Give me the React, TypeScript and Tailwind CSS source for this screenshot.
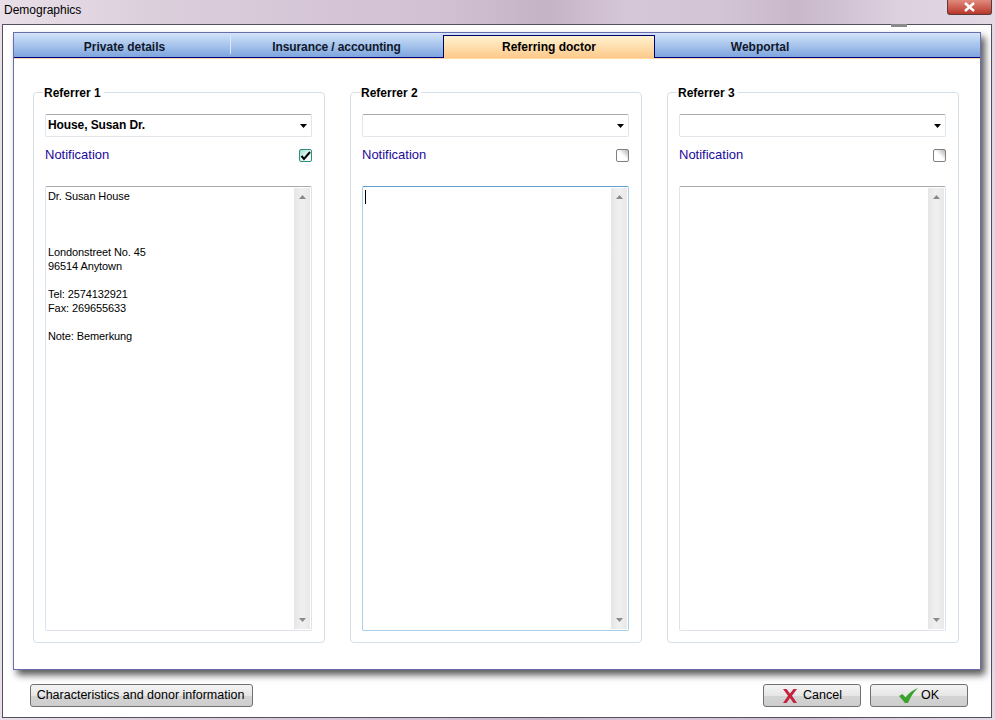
const tabs = ['Private details', 'Insurance / accounting', 'Referring doctor', 'Webportal'];

const addressLines = [
  'Dr. Susan House',
  '',
  '',
  '',
  'Londonstreet No. 45',
  '96514 Anytown',
  '',
  'Tel: 2574132921',
  'Fax: 269655633',
  '',
  'Note: Bemerkung',
];

function Arrow({ up }: { up?: boolean }) {
  return (
    <svg width="7" height="4" viewBox="0 0 7 4" className={up ? 'rotate-180' : ''}>
      <path d="M0 0h7L3.500 4z" fill="#8a8a8a" />
    </svg>
  );
}

function Referrer({
  title,
  doctor,
  checked,
  focused,
  lines,
}: {
  title: string;
  doctor?: string;
  checked?: boolean;
  focused?: boolean;
  lines?: string[];
}) {
  return (
    <fieldset className="w-[292px] h-[559px] border border-[#d5dfe8] rounded-[4px] pl-[11px] pr-[12px] pt-[14px] pb-[11px] flex flex-col min-w-0">
      <legend className="ml-[-2px] pr-[3px] pl-[1px] pt-[2px] text-[12px] font-bold leading-[14px] text-black">{title}</legend>
      <div className="h-[23px] shrink-0 border border-[#e2e5ea] border-t-[#a9a9b0] rounded-[2px] flex items-center justify-between pl-[2px] pr-[4px]">
        <span className="pb-[2px] text-[12px] font-bold tracking-[-0.1px] text-black">{doctor}</span>
        <svg width="7" height="4" viewBox="0 0 7 4" className="mt-[1px]">
          <path d="M0 0h7L3.500 4z" fill="#000" />
        </svg>
      </div>
      <div className="h-[49px] shrink-0 flex justify-between items-start pt-[10px]">
        <span className="text-[13px] leading-[15px] text-[#1a0a9c]">Notification</span>
        {checked ? (
          <span className="mt-[2px] w-[13px] h-[13px] border border-[#2f8f7f] rounded-[2px] bg-gradient-to-br from-[#9fdccb] via-[#e0f5ef] to-white flex items-center justify-center">
            <svg width="11" height="10" viewBox="0 0 11 10">
              <path d="M1.500 5 4 8l6-7" fill="none" stroke="#000" strokeWidth="2" />
            </svg>
          </span>
        ) : (
          <span className="mt-[2px] w-[13px] h-[13px] border border-[#808080] rounded-[2px] bg-gradient-to-bl from-[#b4b4b4] via-white to-white" />
        )}
      </div>
      <div
        className={`flex-1 min-h-0 border rounded-[2px] flex justify-between pl-[2px] pr-[1px] py-[1px] ${
          focused ? 'border-[#a9cfe6] border-t-[#5f9fc9]' : 'border-[#e0e4ea] border-t-[#a9a9a9]'
        }`}
      >
        <div className="pt-[1px] text-[11px] tracking-[-0.1px] leading-[14px] text-black">
          {focused && <div className="w-[1px] h-[14px] bg-black mt-[1px]" />}
          {lines?.map((line, i) => (
            <div key={i} className="h-[14px]">
              {line}
            </div>
          ))}
        </div>
        <div className="w-[16px] bg-gradient-to-r from-[#e6e6e6] via-[#f0f0f0] to-[#e8e8e8] flex flex-col justify-between items-center py-[7px]">
          <Arrow up />
          <Arrow />
        </div>
      </div>
    </fieldset>
  );
}

function ToolButton({ className, children }: { className: string; children: React.ReactNode }) {
  return (
    <button
      className={`h-[23px] border border-[#707070] rounded-[3px] bg-[linear-gradient(#f4f4f4,#e6e6e6_50%,#d4d4d4_52%,#cdcdcd)] text-[12.500px] text-black flex items-center justify-center ${className}`}
    >
      {children}
    </button>
  );
}

export default function App() {
  return (
    <div
      className="w-[995px] h-[720px] overflow-hidden flex flex-col bg-[linear-gradient(90deg,#e8dfe8,#dccfdc_15%,#d4c4d6_35%,#d0c0d2_45%,#c4b3c4_55%,#d6c7d8_63%,#d4c5d6_72%,#c8b8ca_80%,#dccfde_90%,#e3d9e5)]"
      style={{ fontFamily: '"Liberation Sans", Arial, sans-serif' }}
    >
      {/* Titelleiste */}
      <div className="h-[24px] shrink-0 flex justify-between pl-[4px] pr-[3px]">
        <span className="text-[12px] leading-[20px] text-black">Demographics</span>
        <div className="w-[45px] h-[15px] rounded-b-[3px] border border-t-0 border-[#5c3a3a] bg-gradient-to-b from-[#e08a7c] to-[#b8342a] flex items-center justify-center">
          <svg width="13" height="10" viewBox="0 0 13 10">
            <path d="M2 1l9 8M11 1l-9 8" stroke="#fff" strokeWidth="2.400" />
          </svg>
        </div>
      </div>

      {/* Fenster */}
      <div className="relative flex-1 ml-[2px] mr-[3px] mb-[2px] border border-[#555060] bg-white px-[10px] pt-[7px] flex flex-col min-h-0">
        <div className="absolute left-[888px] top-[-1px] w-[16px] h-[3px] bg-[#8a8a8a]" />
        <div className="h-[638px] shrink-0 border border-[#6a6eb0] bg-white shadow-[4px_5px_7px_rgba(0,0,0,0.65)] flex flex-col">
          <div className="shrink-0 border-b border-b-[#ffd9a0]">
            <div className="h-[25px] grid grid-cols-[217px_212px_212px_212px] border-b border-b-[#000080] bg-gradient-to-b from-[#d3e4f9] to-[#7ea5de]">
              {tabs.map((tab, i) =>
                i === 2 ? (
                  <div
                    key={tab}
                    className="mt-[2px] mb-[-1px] border-x border-t border-[#000070] bg-gradient-to-b from-[#fff2cf] to-[#fdc98a] text-[12px] font-bold text-black flex items-center justify-center"
                  >
                    {tab}
                  </div>
                ) : (
                  <div
                    key={tab}
                    className={`text-[12px] font-bold text-[#10182c] flex items-center justify-center ${
                      i === 0 ? 'mt-[2px] h-[19px] pt-[5px] pl-[5px] border-r border-r-[#dbe8fa]' : 'pt-[4px]'
                    } ${i === 1 ? 'tracking-[-0.1px] pr-[1px]' : ''} ${i === 3 ? 'pr-[2px]' : ''}`}
                  >
                    {tab}
                  </div>
                ),
              )}
            </div>
          </div>
          <div className="flex-1 flex gap-[25px] px-[19px] pt-[25px]">
            <Referrer title="Referrer 1" doctor="House, Susan Dr." checked lines={addressLines} />
            <Referrer title="Referrer 2" focused />
            <Referrer title="Referrer 3" />
          </div>
        </div>

        <div className="flex-1 flex items-start justify-between pl-[17px] pr-[13px] pt-[14px]">
          <ToolButton className="w-[223px] pr-[2px]">Characteristics and donor information</ToolButton>
          <div className="flex gap-[9px]">
            <ToolButton className="w-[98px] gap-[6px] pl-[1px]">
              <svg width="14" height="14" viewBox="0 0 14 14">
                <path d="M0 0h3.500L7 4.500 10.500 0H14L9 6.800 14 14h-3.500L7 9 3.500 14H0l5-7.200z" fill="#c4233f" />
              </svg>
              Cancel
            </ToolButton>
            <ToolButton className="w-[98px] gap-[3px]">
              <svg width="19" height="15" viewBox="0 0 19 15">
                <path d="M0 8l3.500-2 3 3.500C10 5 13 2.500 19 0c-4.500 4-7.500 9-10 15H6z" fill="#3aa32c" />
              </svg>
              OK
            </ToolButton>
          </div>
        </div>
      </div>
    </div>
  );
}
